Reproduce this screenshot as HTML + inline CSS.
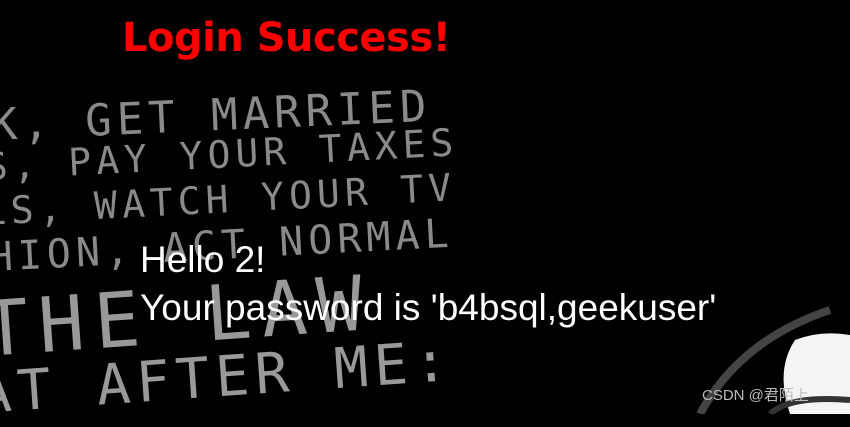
<!DOCTYPE html>
<html><head><meta charset="utf-8"><style>
html,body{margin:0;padding:0;background:#000;}
body{width:850px;height:414px;position:relative;overflow:hidden;}
.bg{position:absolute;font-family:"DejaVu Sans Mono","Liberation Mono",monospace;color:#8a8a8a;white-space:nowrap;transform-origin:0 100%;letter-spacing:5px;}
#t{position:absolute;left:122px;top:15px;font-family:"DejaVu Sans","Liberation Sans",sans-serif;font-weight:bold;font-size:40px;color:#f00;letter-spacing:-0.5px;}
.w{position:absolute;left:140px;font-family:"Liberation Sans",sans-serif;font-size:37px;color:#fff;white-space:nowrap;}
#c{position:absolute;left:702px;top:384px;font-family:"Liberation Sans","Noto Sans CJK SC",sans-serif;font-size:15px;color:#bbb;}
</style></head><body>
<div class="bg" style="left:-8px;top:100px;font-size:44px;transform:rotate(-2.5deg)">K, GET MARRIED</div>
<div class="bg" style="left:-14px;top:145px;font-size:38px;transform:rotate(-3deg)">S, PAY YOUR TAXES</div>
<div class="bg" style="left:-16px;top:190px;font-size:38px;transform:rotate(-3deg)">LS, WATCH YOUR TV</div>
<div class="bg" style="left:-10px;top:235px;font-size:40px;transform:rotate(-3deg)">HION, ACT NORMAL</div>
<div class="bg" style="left:-14px;top:285px;font-size:76px;transform:rotate(-4deg);letter-spacing:10px;color:#999">THE LAW</div>
<div class="bg" style="left:-20px;top:362px;font-size:56px;transform:rotate(-4deg);letter-spacing:6px;color:#999">AT AFTER ME:</div>
<svg style="position:absolute;left:0;top:0" width="850" height="414">
<path d="M700 414 Q740 340 830 310" stroke="#444" stroke-width="8" fill="none"/>
<path d="M790 414 Q775 370 795 340 Q820 330 850 335 L850 414 Z" fill="#f4f4f4"/>
<path d="M770 414 Q790 395 850 400" stroke="#333" stroke-width="6" fill="none"/>
</svg>
<div id="t">Login Success!</div>
<div class="w" style="top:239px">Hello 2!</div>
<div class="w" style="top:287px">Your password is 'b4bsql,geekuser'</div>
<div id="c">CSDN @君陌上</div>
</body></html>
